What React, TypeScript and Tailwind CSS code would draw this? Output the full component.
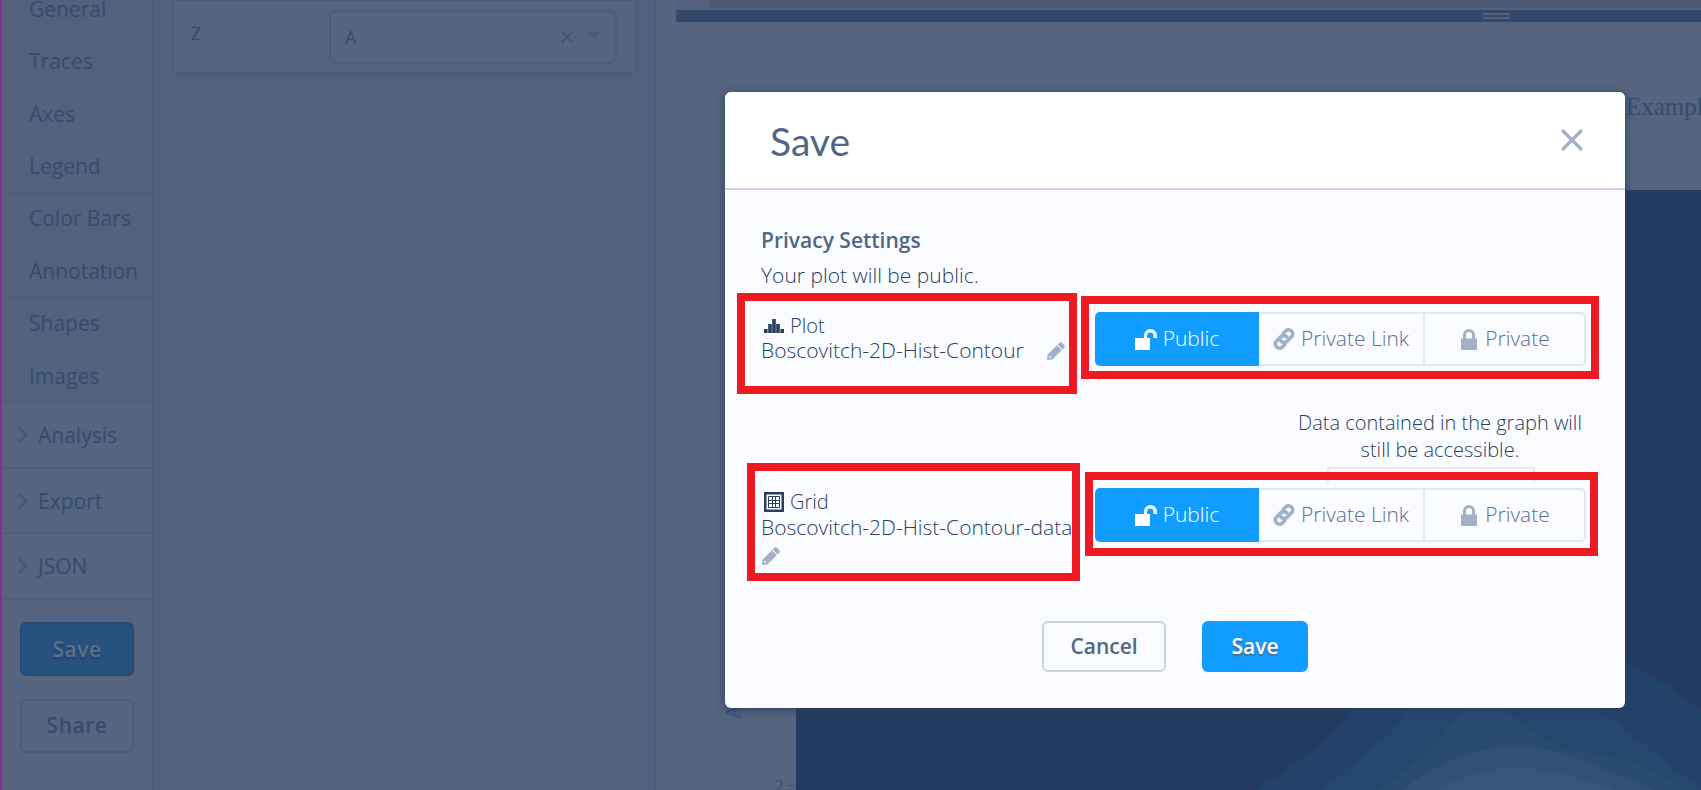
import React from "react";
import { X } from "lucide-react";

const navItems = ["General", "Traces", "Axes", "Legend", "Color Bars", "Annotation", "Shapes", "Images"];
const sections = ["Analysis", "Export", "JSON"];

function ChevronIcon() {
  return (
    <svg viewBox="0 0 10 16" className="h-4 w-2.5 shrink-0" fill="none" stroke="#485876" strokeWidth="3" aria-hidden="true">
      <path d="M1 1l7 7-7 7" />
    </svg>
  );
}

function UnlockIcon() {
  return (
    <svg viewBox="0 0 22 21" className="h-[21px] w-[22px] shrink-0" fill="currentColor" aria-hidden="true">
      <path d="M0 9h9V6.500a6.500 6.500 0 0 1 13 0V9h-3.500V6.800a3.200 3.200 0 0 0-6.400 0V9H15v12H0z" />
    </svg>
  );
}

function LinkIcon() {
  return (
    <svg viewBox="0 0 22 22" className="h-[22px] w-[22px] shrink-0" fill="none" stroke="currentColor" strokeWidth="3.6" strokeLinecap="round" strokeLinejoin="round" aria-hidden="true">
      <path d="M8 13a4.300 4.300 0 0 0 6.200.2l4.600-4.600a4.200 4.200 0 0 0-5.900-5.900L10.300 5.200" />
      <path d="M14 9a4.300 4.300 0 0 0-6.200-.2L3.200 13.400a4.200 4.200 0 0 0 5.900 5.900l2.600-2.500" />
    </svg>
  );
}

function LockIcon() {
  return (
    <svg viewBox="0 0 16 21" className="h-[21px] w-4 shrink-0" fill="currentColor" aria-hidden="true">
      <path d="M0 9.500h2V6a6 6 0 0 1 12 0v3.500h2V21H0zM5 9.500h6V6a3 3 0 0 0-6 0z" />
    </svg>
  );
}

function HistogramIcon() {
  return (
    <svg viewBox="0 0 20 14" className="h-3.5 w-5" fill="#2a3f5f" aria-hidden="true">
      <path d="M0 10h3.600v4H0zM4.200 5h3.600v9H4.200zM8.200 0h3.600v14H8.200zM12.200 5h3.600v9h-3.600zM16.400 10H20v4h-3.600z" />
    </svg>
  );
}

function GridIcon() {
  return (
    <svg viewBox="0 0 20 20" className="h-5 w-5" fill="none" stroke="#2a3f5f" aria-hidden="true">
      <rect x="1.250" y="1.250" width="17.500" height="17.500" strokeWidth="2.500" />
      <path d="M4.500 4.500h11v11h-11zM8.500 4.500v11M11.500 4.500v11M4.500 8.500h11M4.500 11.500h11" strokeWidth="1" />
    </svg>
  );
}

function PencilIcon() {
  return (
    <svg viewBox="0 0 18 18" className="h-[18px] w-[18px]" fill="currentColor" aria-hidden="true">
      <path d="M12.200 1a2.200 2.200 0 0 1 3 0l1.900 1.900a2.200 2.200 0 0 1 0 3l-1.500 1.500-4.900-4.900z" />
      <path fillRule="evenodd" d="M9.900 3.300l4.900 4.900L5.400 17.600 0 18l.4-5.300zM2.400 13.900l-.3 1.900 1.900-.3.300-.9z" />
    </svg>
  );
}

function PrivacyToggle({ label }: { label: string }) {
  const base = "flex h-full items-center justify-center gap-1.5";
  return (
    <div role="group" aria-label={label} className="flex h-[54px] w-[491px] text-[21px] font-light text-[#5f6f8f]">
      <button className={base + " w-[164px] rounded-l-[5px] bg-[#119dff] text-white"}>
        <UnlockIcon />
        Public
      </button>
      <button className={base + " w-[166px] border-y-2 border-r-2 border-[#dfe8f3]"}>
        <span className="text-[#a2b1c6]"><LinkIcon /></span>
        Private Link
      </button>
      <button className={base + " flex-1 rounded-r-[5px] border-y-2 border-r-2 border-[#dfe8f3] pl-0.5"}>
        <span className="mr-0.5 text-[#a2b1c6]"><LockIcon /></span>
        Private
      </button>
    </div>
  );
}

function EditButton({ label }: { label: string }) {
  return (
    <button aria-label={label} className="text-[#a2b1c6]">
      <PencilIcon />
    </button>
  );
}

function ContourPlot() {
  return (
    <svg viewBox="796 190 905 600" className="h-[600px] w-[905px] shrink-0" aria-hidden="true">
      <rect x="796" y="190" width="905" height="600" fill="#243b61" />
      <path d="M1255 790Q1300 764 1324 740Q1342 724 1358 700Q1480 560 1625 663Q1680 690 1701 712V790Z" fill="#23426a" />
      <path d="M1320 790Q1355 765 1380 742Q1397 728 1407 712L1430 680H1575L1603 712L1701 789V790Z" fill="#25466d" />
      <path d="M1378 790Q1412 768 1434 745L1463 713L1480 695L1507 712Q1548 744 1568 750Q1620 756 1639 765Q1668 776 1684 790Z" fill="#2a4b70" />
      <path d="M1402 790Q1460 747 1512 747Q1560 747 1603 770Q1634 780 1653 790Z" fill="#315073" />
      <path d="M1436 790Q1477 768 1514 768Q1555 768 1615 790Z" fill="#375578" />
    </svg>
  );
}

export default function App() {
  return (
    <div className="relative flex h-screen overflow-hidden bg-[#55657f] font-['Open_Sans',sans-serif] text-[#334b6d]">
      <aside className="flex w-[154px] shrink-0 flex-col border-r-2 border-l-2 border-r-[#4c5c7b] border-l-[#8a2a9b] text-[21px]">
        <nav className="-mt-4 flex h-[419px] shrink-0 flex-col bg-[#52627d]">
          {navItems.map((item) => (
            <a key={item} href="#" className="flex flex-1 items-center border-b-2 border-[#4e5e7b] pt-px pl-[27px]">
              {item}
            </a>
          ))}
        </nav>
        <div className="flex h-[197px] shrink-0 flex-col">
          {sections.map((item) => (
            <button key={item} className="flex flex-1 items-center gap-2.5 border-b-2 border-[#4e5e7b] pl-4">
              <ChevronIcon />
              <span className="pt-0.5">{item}</span>
            </button>
          ))}
        </div>
        <div className="flex flex-col gap-[23px] px-[18px] pt-[22px] font-semibold tracking-wide">
          <button className="h-[54px] rounded-md border-2 border-[#264a73] bg-[#25517e] pt-0.5 text-[#5f6f88] [text-shadow:0_2px_2px_#1f4167]">
            Save
          </button>
          <button className="h-[54px] rounded-md border-2 border-[#4c5c7b]">Share</button>
        </div>
      </aside>

      <section className="w-[502px] shrink-0 border-r-2 border-[#4c5c7b] bg-[#51617d] pr-[17px] pl-[18px]">
        <div className="flex h-[74px] items-start justify-between rounded-b-md border-2 border-t-1 border-[#4c5c7b] bg-[#55657f] pr-[18px] pl-[17px] text-[18px]">
          <span className="pt-[19px]">Z</span>
          <div className="mt-[9px] flex h-[54px] w-[288px] items-center rounded-md border-2 border-[#4c5c7b] pr-3.5 pl-3.5">
            <span className="flex-1">A</span>
            <button aria-label="Clear">
              <svg viewBox="0 0 12 12" className="mr-3.5 h-3 w-3" stroke="#445573" strokeWidth="2" aria-hidden="true">
                <path d="M0 0l12 12M12 0L0 12" />
              </svg>
            </button>
            <svg viewBox="0 0 14 7" className="mb-1 h-[7px] w-3.5" fill="#485876" aria-hidden="true">
              <path d="M0 0h14L7 7z" />
            </svg>
          </div>
        </div>
      </section>

      <main className="flex min-w-0 flex-1 flex-col">
        <div className="ml-5 flex flex-col">
          <div className="h-2 border-l-[34px] border-[#52617d] bg-[#4a5973]" />
          <div className="h-0.5 bg-[#52627d]" />
          <div className="flex h-3 flex-col items-end justify-center gap-0.5 bg-[#324869] pr-[191px]">
            <span className="h-0.5 w-[27px] bg-[#52627d]" />
            <span className="h-0.5 w-[27px] bg-[#52627d]" />
          </div>
        </div>
        <div className="flex h-[168px] shrink-0 items-center justify-end overflow-hidden font-['Liberation_Serif',serif] text-[25px]">
          <h2 className="w-[75px] shrink-0 pt-0.5 whitespace-nowrap">Example</h2>
        </div>
        <div className="flex flex-1">
          <div className="relative w-[140px] shrink-0 font-['Liberation_Serif',serif]">
            <span className="absolute top-[514px] left-[70px] -rotate-90 text-[20px] leading-4">A</span>
            <span className="absolute top-[588px] left-[119px] text-[17px] leading-4 whitespace-nowrap">2</span>
            <span className="absolute top-[595px] left-[131px] h-px w-[7px] bg-[#334b6d]" />
          </div>
          <ContourPlot />
        </div>
      </main>

      <div className="absolute inset-0 flex items-start justify-end pt-[92px] pr-[76px]">
        <div role="dialog" aria-labelledby="save-title" className="w-[900px] rounded-md bg-[#fafcff] text-[#2a3f5f] shadow-[0_2px_10px_#2a3f5f]">
          <header className="flex h-[98px] items-center justify-between rounded-t-md border-b-2 border-[#c8d4e3] bg-white pr-[35px] pl-[45px] text-[#506784]">
            <h1 id="save-title" className="pt-[3px] font-['Lato',sans-serif] text-[39px]">Save</h1>
            <button aria-label="Close" className="text-[#a2b1c6]">
              <X size={36} strokeWidth={2.2} />
            </button>
          </header>

          <div className="pr-[39px] pl-9 text-[21px] font-light">
            <h3 className="pt-[33px] leading-[34px] font-semibold text-[#506784]">Privacy Settings</h3>
            <p className="pb-px leading-9">Your plot will be public.</p>

            <div className="relative flex h-[176px] justify-between pt-[18px]">
              <div className="w-[304px] pt-px">
                <div className="flex h-[25px] items-center gap-1.5 pl-[3px] text-[20px]">
                  <HistogramIcon />
                  Plot
                </div>
                <div className="flex h-[25px] items-center justify-between">
                  <span>Boscovitch-2D-Hist-Contour</span>
                  <EditButton label="Rename plot" />
                </div>
              </div>
              <PrivacyToggle label="Plot privacy" />
              <div className="absolute -top-px -left-6 h-[101px] w-[340px] border-8 border-[#ed1c24]" />
              <div className="absolute top-0.5 -right-[13px] h-[83px] w-[518px] border-8 border-[#ed1c24]" />
              <p className="absolute top-[115px] right-px w-[290px] text-center text-[20px] leading-[27px]">
                Data contained in the graph will still be accessible.
              </p>
              <div className="absolute top-[173px] right-[51px] h-[15px] w-[208px] border-2 border-b-0 border-[#e6e8eb]" />
            </div>

            <div className="relative flex h-[151px] justify-between pt-[18px]">
              <div className="w-[312px] pt-px">
                <div className="flex h-[25px] items-center gap-1.5 pl-[3px] text-[20px]">
                  <GridIcon />
                  Grid
                </div>
                <div className="flex h-[27px] items-center">Boscovitch-2D-Hist-Contour-data</div>
                <div className="flex h-[30px] items-center pl-px">
                  <EditButton label="Rename grid" />
                </div>
              </div>
              <PrivacyToggle label="Grid privacy" />
              <div className="absolute -top-[7px] -left-3.5 h-[118px] w-[333px] border-8 border-[#ed1c24]" />
              <div className="absolute top-0.5 -right-3 h-[84px] w-[513px] border-8 border-[#ed1c24]" />
            </div>

            <footer className="flex h-[87px] gap-9 pl-[281px] font-semibold">
              <button className="h-[51px] w-[124px] rounded-md border-2 border-[#c8d4e3] text-[#506784]">Cancel</button>
              <button className="h-[51px] w-[106px] rounded-md bg-[#119dff] text-white [text-shadow:0_2px_2px_#506784]">Save</button>
            </footer>
          </div>
        </div>
      </div>
    </div>
  );
}
